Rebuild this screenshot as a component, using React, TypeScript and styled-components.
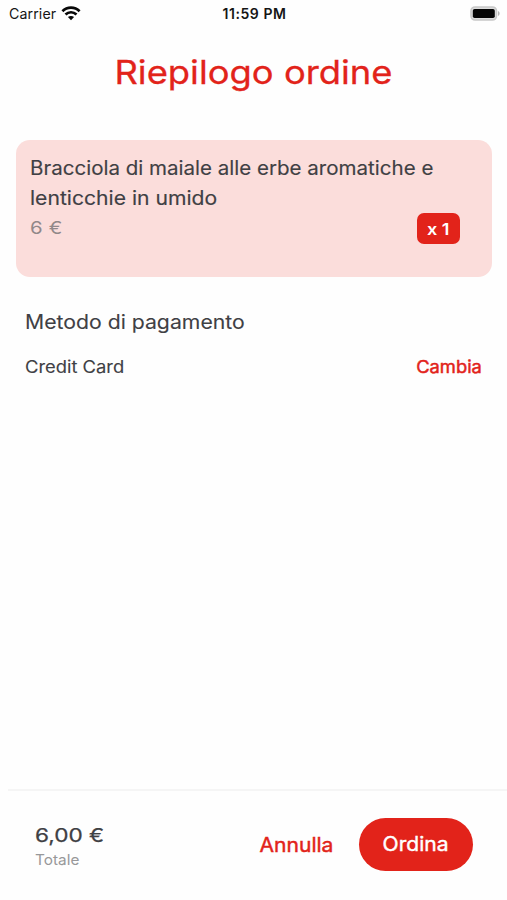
import React from "react";
import styled, { createGlobalStyle } from "styled-components";

const red = "#e2231a";

const Global = createGlobalStyle`
  * { box-sizing: border-box; }
  body { margin: 0; background: #fefefe; font-family: Inter, sans-serif; color: #3f4044; }
  h1, h2, p { margin: 0; font-weight: 400; }
  button { border: 0; background: none; padding: 0; margin: 0; font-family: inherit; }
`;

const Screen = styled.main`
  width: 507px;
  height: 900px;
  display: flex;
  flex-direction: column;
  overflow: hidden;
`;

const StatusBar = styled.header`
  height: 28px;
  display: grid;
  grid-template-columns: 1fr auto 1fr;
  align-items: center;
  padding: 0 7px 1px 9px;
  color: #151515;
`;

const Carrier = styled.div`
  display: flex;
  align-items: center;
  gap: 5px;
  font-size: 14.2px;
  letter-spacing: 0.1px;
`;

const Clock = styled.time`
  font-size: 14px;
  font-weight: 600;
  letter-spacing: 0.55px;
`;

const BatteryIcon = styled.svg`
  justify-self: end;
`;

/* Wide text face: glyphs are stretched horizontally from their anchored side. */
const Wide = styled.span<{ $x: number; $from?: "left" | "center" | "right" }>`
  display: block;
  white-space: nowrap;
  transform: scaleX(${(p) => p.$x});
  transform-origin: ${(p) => p.$from ?? "left"} center;
`;

const Title = styled.h1`
  margin-top: 22px;
  font-size: 33px;
  line-height: 44px;
  color: ${red};
  text-align: center;
  -webkit-text-stroke: 0.3px ${red};
`;

const Card = styled.section`
  margin: 46px 15px 0 15.5px;
  height: 137px;
  padding: 14px 32.5px 0 14.5px;
  border-radius: 14px;
  background: #fbdddb;
`;

const DishName = styled.p`
  font-size: 19.5px;
  line-height: 29.5px;
  -webkit-text-stroke: 0.15px currentColor;
`;

const PriceRow = styled.div`
  display: flex;
  justify-content: space-between;
  align-items: center;
  height: 31px;
`;

const Price = styled.span`
  font-size: 17px;
  line-height: 31px;
  letter-spacing: 0.1px;
  color: #918889;
`;

const Quantity = styled.span`
  display: grid;
  place-items: center;
  width: 42.5px;
  height: 31px;
  border-radius: 7px;
  background: ${red};
  color: #fff;
  font-size: 16.5px;
  font-weight: 600;
`;

const Payment = styled.section`
  padding: 31px 25px 0 25px;
`;

const Heading = styled.h2`
  font-size: 19.5px;
  line-height: 28px;
  -webkit-text-stroke: 0.1px currentColor;
`;

const MethodRow = styled.div`
  display: flex;
  justify-content: space-between;
  margin-top: 19px;
  font-size: 17px;
  line-height: 24px;
  -webkit-text-stroke: 0.1px currentColor;
`;

const LinkButton = styled.button<{ $size: number }>`
  font-size: ${(p) => p.$size}px;
  line-height: 24px;
  color: ${red};
  -webkit-text-stroke: 0.45px ${red};
`;

const Footer = styled.footer`
  display: flex;
  align-items: center;
  height: 111px;
  margin: auto 0 0 8px;
  padding: 0 34.5px 2px 27px;
  border-top: 2px solid #f5f5f5;
`;

const Total = styled.div`
  margin-right: auto;
  padding-top: 5px;
`;

const Amount = styled.p`
  font-size: 19px;
  line-height: 24px;
  -webkit-text-stroke: 0.25px currentColor;
`;

const Caption = styled.p`
  margin-top: 1px;
  font-size: 14.5px;
  line-height: 22px;
  color: #98989a;
`;

const OrderButton = styled.button`
  display: grid;
  place-items: center;
  width: 114px;
  height: 53px;
  margin-left: 25px;
  border-radius: 27px;
  background: ${red};
  color: #fff;
  font-size: 19.5px;
  line-height: 24px;
  padding-bottom: 1px;
  -webkit-text-stroke: 0.4px #fff;
`;

function WifiIcon() {
  return (
    <svg width="20" height="15" viewBox="0 0 20 15" fill="none" stroke="#080808" strokeWidth="2.7">
      <path d="M1.4 5.2C6.2.5 13.8.5 18.6 5.2" />
      <path d="M4.5 8.5c3.1-3 7.9-3 11 0" />
      <path d="M10 14.2 6.9 11.1c1.8-1.6 4.4-1.6 6.2 0Z" fill="#080808" stroke="none" />
    </svg>
  );
}

export default function App() {
  return (
    <>
      <Global />
      <Screen>
        <StatusBar>
          <Carrier>
            Carrier
            <WifiIcon />
          </Carrier>
          <Clock>11:59 PM</Clock>
          <BatteryIcon width="30" height="15" viewBox="0 0 30 15">
            <rect x="1" y="1" width="25.5" height="13" rx="4" fill="#ddd" stroke="#c8c8c8" strokeWidth="1.6" />
            <rect x="2.800" y="3" width="22" height="9" rx="1.800" fill="#050505" />
            <path d="M28 5v5c1.100-.4 1.600-1.400 1.600-2.500S29.100 5.400 28 5Z" fill="#b5b5b5" />
          </BatteryIcon>
        </StatusBar>
        <Title>
          <Wide $x={1.102} $from="center">Riepilogo ordine</Wide>
        </Title>
        <Card>
          <DishName>
            <Wide $x={1.053}>Bracciola di maiale alle erbe aromatiche e</Wide>
            <Wide $x={1.083}>lenticchie in umido</Wide>
          </DishName>
          <PriceRow>
            <Price>
              <Wide $x={1.2}>6 €</Wide>
            </Price>
            <Quantity>
              <Wide $x={1.1} $from="center">x 1</Wide>
            </Quantity>
          </PriceRow>
        </Card>
        <Payment>
          <Heading>
            <Wide $x={1.088}>Metodo di pagamento</Wide>
          </Heading>
          <MethodRow>
            <Wide $x={1.08}>Credit Card</Wide>
            <LinkButton $size={17}>
              <Wide $x={1.08} $from="right">Cambia</Wide>
            </LinkButton>
          </MethodRow>
        </Payment>
        <Footer>
          <Total>
            <Amount>
              <Wide $x={1.19}>6,00 €</Wide>
            </Amount>
            <Caption>
              <Wide $x={1.06}>Totale</Wide>
            </Caption>
          </Total>
          <LinkButton $size={19.5}>
            <Wide $x={1.08} $from="right">Annulla</Wide>
          </LinkButton>
          <OrderButton>
            <Wide $x={1.08} $from="center">Ordina</Wide>
          </OrderButton>
        </Footer>
      </Screen>
    </>
  );
}
